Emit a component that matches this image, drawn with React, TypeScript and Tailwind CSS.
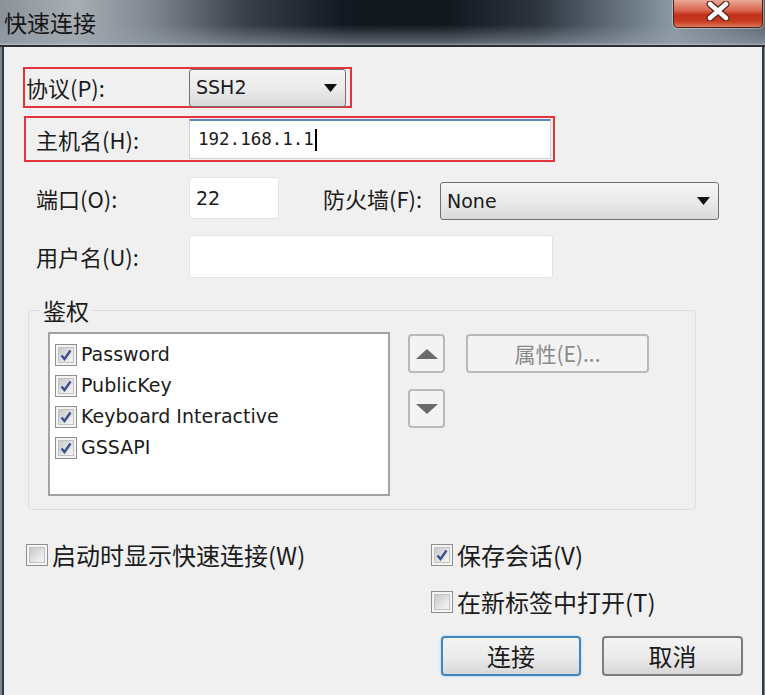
import React from "react";

const cjk = "font-['Noto_Sans_CJK_SC',sans-serif]";
const latin = "font-['DejaVu_Sans','Noto_Sans_CJK_SC',sans-serif]";

const CheckBox = ({ checked }: { checked?: boolean }) => (
  <span className="flex h-[22px] w-[22px] shrink-0 items-center justify-center border border-[#8f8f8f] bg-[#f4f4f4]">
    <span className="flex h-[16px] w-[16px] items-center justify-center border border-[#c2c2c2] bg-gradient-to-br from-[#c9c9c9] to-[#f7f7f7]">
      {checked && (
        <svg width="14" height="14" viewBox="0 0 14 14">
          <path d="M2.5 7.5 L5.5 11 L11.5 2.5" fill="none" stroke="#3a4f8e" strokeWidth="2.4" />
        </svg>
      )}
    </span>
  </span>
);

const Caret = () => (
  <svg width="13" height="8" viewBox="0 0 13 8">
    <path d="M0 0 H13 L6.5 8 Z" fill="#111" />
  </svg>
);

const ComboBox = ({ value, className }: { value: string; className: string }) => (
  <div
    className={`flex items-center justify-between rounded-[3px] border border-[#707070] bg-gradient-to-b from-[#f4f4f4] via-[#ebebeb] to-[#d9d9d9] pl-[6px] pr-[8px] text-[19px] text-[#1b1b1b] ${latin} ${className}`}
  >
    <span>{value}</span>
    <Caret />
  </div>
);

const ListItem = ({ text }: { text: string }) => (
  <div className="flex h-[31px] items-center gap-[4px]">
    <CheckBox checked />
    <span className={`text-[19px] text-[#1b1b1b] ${latin}`}>{text}</span>
  </div>
);

const ArrowButton = ({ up }: { up?: boolean }) => (
  <div className="flex h-[39px] w-[37px] items-center justify-center rounded-[4px] border-2 border-[#b9b9b9] bg-[#f3f3f3]">
    <svg width="22" height="10" viewBox="0 0 22 10">
      <path d={up ? "M0 10 L11 0 L22 10 Z" : "M0 0 H22 L11 10 Z"} fill="#6b6b6b" />
    </svg>
  </div>
);

export default function App() {
  return (
    <div className="flex h-[695px] w-[765px] flex-col overflow-hidden bg-[#6f7880]">
      {/* title bar */}
      <div className="flex h-[45px] shrink-0 items-start justify-between bg-[linear-gradient(to_bottom,rgba(0,0,0,0)_55%,rgba(150,160,170,0.55)_95%,rgba(200,205,210,0.7)),linear-gradient(to_right,#8b939a,#a7aeb4_10%,#7d858d_20%,#3a4048_32%,#141820_45%,#12171e_58%,#2c343e_70%,#6a7683_82%,#8c99a5_88%,#5d6771)]">
        <div className={`mt-[5px] pl-[4px] text-[23px] text-[#161616] ${cjk}`}>快速连接</div>
        <div className="mr-[2px] flex h-[28px] w-[90px] items-center justify-center rounded-b-[5px] border border-t-0 border-[#4a2018] bg-[linear-gradient(to_bottom,#e9a898,#d8624a_40%,#c0301a_55%,#c83d22_80%,#de7a5c)] shadow-[0_0_0_1px_rgba(255,255,255,0.35)]">
          <svg width="24" height="20" viewBox="0 0 24 20" className="-mt-[6px]">
            <path d="M4 3 L20 17 M20 3 L4 17" stroke="#5a2418" strokeWidth="7" strokeLinecap="round" />
            <path d="M4 3 L20 17 M20 3 L4 17" stroke="#ffffff" strokeWidth="4.5" strokeLinecap="round" />
          </svg>
        </div>
      </div>

      {/* window body */}
      <div className="flex flex-1 border-t-2 border-[#2a2f35] bg-[#7b848c] pl-[2px] pr-[1px]">
        <div className="flex flex-1 flex-col border-x-2 border-[#34393f] bg-[#f0f0f0] text-[#1b1b1b]">
          {/* protocol */}
          <div className="ml-[19px] mt-[20px] flex h-[41px] w-[329px] items-center border-2 border-[#e4333b]">
            <span className={`w-[164px] pl-[1px] text-[22px] ${cjk}`}>协议(P):</span>
            <ComboBox value="SSH2" className="h-[38px] w-[157px]" />
          </div>

          {/* host */}
          <div className="ml-[20px] mt-[8px] flex h-[46px] w-[531px] items-center border-2 border-[#e4333b]">
            <span className={`w-[163px] pl-[10px] text-[22px] ${cjk}`}>主机名(H):</span>
            <div className="flex h-[40px] w-[362px] items-center border border-t-2 border-[#c9d3de] border-t-[#5f87b4] bg-white pl-[8px] font-['DejaVu_Sans_Mono',monospace] text-[17.5px]">
              192.168.1.1
              <span className="ml-[1px] h-[22px] w-[2px] bg-black" />
            </div>
          </div>

          {/* port + firewall */}
          <div className="ml-[32px] mt-[15px] flex h-[42px] items-center">
            <span className={`w-[153px] text-[22px] ${cjk}`}>端口(O):</span>
            <div className={`h-[42px] w-[90px] rounded-[3px] border border-[#e2e3e8] bg-white pl-[6px] pt-[6px] text-[19px] ${latin}`}>
              22
            </div>
            <span className={`ml-[44px] w-[117px] text-[22px] ${cjk}`}>防火墙(F):</span>
            <ComboBox value="None" className="mt-[6px] h-[38px] w-[279px]" />
          </div>

          {/* username */}
          <div className="ml-[32px] mt-[16px] flex h-[43px] items-center">
            <span className={`w-[153px] text-[22px] ${cjk}`}>用户名(U):</span>
            <div className="h-[43px] w-[364px] rounded-[3px] border border-[#e2e3e8] bg-white" />
          </div>

          {/* auth group */}
          <fieldset className="ml-[24px] mt-[19px] w-[668px] rounded-[5px] border border-[#d5dfe5] pb-[13px]">
            <legend className={`ml-[11px] px-[3px] text-[23px] leading-[26px] ${cjk}`}>鉴权</legend>
            <div className="ml-[19px] mt-[9px] flex items-start">
              <div className="h-[164px] w-[342px] border-2 border-[#a3a3a3] bg-white pl-[5px] pt-[5px]">
                <ListItem text="Password" />
                <ListItem text="PublicKey" />
                <ListItem text="Keyboard Interactive" />
                <ListItem text="GSSAPI" />
              </div>
              <div className="ml-[18px] mt-[2px] flex flex-col gap-[16px]">
                <ArrowButton up />
                <ArrowButton />
              </div>
              <div
                className={`ml-[21px] mt-[2px] flex h-[39px] w-[183px] items-center justify-center rounded-[4px] border-2 border-[#b9b9b9] bg-[#f3f3f3] text-[21px] text-[#8a8a8a] ${cjk}`}
              >
                属性(E)...
              </div>
            </div>
          </fieldset>

          {/* options + buttons */}
          <div className="ml-[22px] mt-[34px] flex">
            <div className="flex w-[405px] items-start gap-[4px]">
              <CheckBox />
              <span className={`-mt-[5px] text-[24px] leading-[32px] ${cjk}`}>启动时显示快速连接(W)</span>
            </div>
            <div className="flex flex-col">
              <div className="flex items-start gap-[4px]">
                <CheckBox checked />
                <span className={`-mt-[5px] text-[24px] leading-[32px] ${cjk}`}>保存会话(V)</span>
              </div>
              <div className="mt-[20px] flex items-start gap-[4px]">
                <CheckBox />
                <span className={`-mt-[5px] text-[24px] leading-[32px] ${cjk}`}>在新标签中打开(T)</span>
              </div>
              <div className="ml-[10px] mt-[18px] flex gap-[21px]">
                <div
                  className={`flex h-[40px] w-[140px] items-center justify-center rounded-[4px] border-2 border-[#3f86bd] bg-gradient-to-b from-[#f4f4f4] via-[#ebebeb] to-[#d8d8d8] text-[24px] shadow-[0_0_2px_#7ec4ee] ${cjk}`}
                >
                  连接
                </div>
                <div
                  className={`flex h-[40px] w-[141px] items-center justify-center rounded-[4px] border-2 border-[#7d7d7d] bg-gradient-to-b from-[#f4f4f4] via-[#ebebeb] to-[#d8d8d8] text-[24px] ${cjk}`}
                >
                  取消
                </div>
              </div>
            </div>
          </div>
        </div>
      </div>
    </div>
  );
}
